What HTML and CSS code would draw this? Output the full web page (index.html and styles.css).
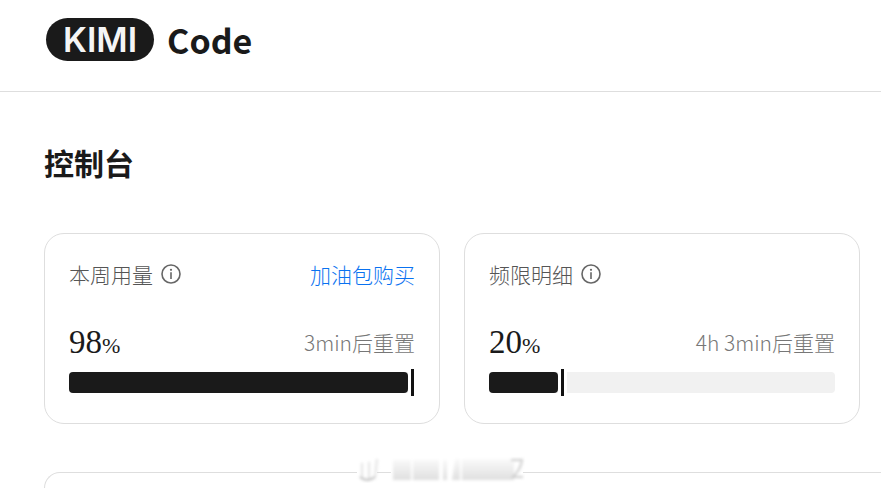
FILE: index.html
```html
<!DOCTYPE html>
<html lang="zh-CN">
<head>
<meta charset="utf-8">
<title>Kimi Code</title>
<meta name="viewport" content="width=device-width, initial-scale=1">
<link rel="stylesheet" href="styles.css">
</head>
<body>
<header class="header">
  <div class="brand"><span class="brand-pill">KIMI</span><span class="brand-name">Code</span></div>
</header>
<main class="main">
  <h1 class="title">控制台</h1>
  <div class="cards">
    <section class="card">
      <div class="row">
        <h2 class="label">本周用量
          <svg class="info" viewBox="0 0 20 20" aria-hidden="true"><circle cx="10" cy="10" r="9"/><path d="M10 8.2V15"/><circle class="dot" cx="10" cy="5.8" r="1.1"/></svg>
        </h2>
        <a class="link" href="#">加油包购买</a>
      </div>
      <div class="row stats">
        <span class="value">98<span class="unit">%</span></span>
        <span class="reset">3min后重置</span>
      </div>
      <div class="meter"><div class="fill" style="width:98%"></div></div>
    </section>
    <section class="card">
      <div class="row">
        <h2 class="label">频限明细
          <svg class="info" viewBox="0 0 20 20" aria-hidden="true"><circle cx="10" cy="10" r="9"/><path d="M10 8.2V15"/><circle class="dot" cx="10" cy="5.8" r="1.1"/></svg>
        </h2>
      </div>
      <div class="row stats">
        <span class="value">20<span class="unit">%</span></span>
        <span class="reset">4h 3min后重置</span>
      </div>
      <div class="meter"><div class="fill" style="width:20%"></div></div>
    </section>
  </div>
  <section class="panel"></section>
</main>
<svg class="smudge" viewBox="0 0 176 32" aria-hidden="true">
  <defs>
    <filter id="soft"><feGaussianBlur stdDeviation="1.5"/></filter>
    <linearGradient id="haze" x1="0" x2="0" y1="0" y2="1"><stop offset="0" stop-color="#fafafa"/><stop offset="1" stop-color="#dfdfdf"/></linearGradient>
  </defs>
  <path d="M2 18h20M36 18h132" stroke="#fff" stroke-width="4"/>
  <g filter="url(#soft)">
    <path d="M7 9v14M14 8v17M22 5l-2 19" stroke="#e2e2e2" stroke-width="2"/>
    <path d="M5 23q7 6 15 0" fill="none" stroke="#bdbdbd" stroke-width="2"/>
    <path d="M38 6h18v20H38zM58 6h26v20H58zM88 6h4v20h-4zM100 5h5v21h-8zM107 5h52v21h-52z" fill="url(#haze)"/>
    <path d="M156 6h11q-1 9-9 17h10" fill="none" stroke="#ccc" stroke-width="2"/>
  </g>
</svg>
</body>
</html>
```
FILE: styles.css
```css
*, ::before, ::after { box-sizing: border-box; }

body {
  display: flex;
  flex-direction: column;
  position: relative;
  min-height: 100vh;
  margin: 0;
  background: #fff;
  color: #1a1a1a;
  font-family: "Noto Sans CJK SC", sans-serif;
}

.header {
  padding: 18px 46px 30px;
  border-bottom: 1px solid #dedede;
}

.brand {
  display: flex;
  align-items: center;
  gap: 13px;
}

.brand-pill {
  padding: 0 17px;
  border-radius: 22px;
  background: #1a1a1a;
  color: #f5f5f5;
  font: 600 34px/43px Inter, sans-serif;
}

.brand-name {
  font: 700 34px/40px "Noto Sans CJK SC", sans-serif;
}

.main {
  display: flex;
  flex: 1;
  flex-direction: column;
  padding: 46px 21px 0 44px;
}

.title {
  margin: 0 0 47px;
  font: 700 30px/48px "Noto Sans CJK SC", sans-serif;
}

.cards {
  display: grid;
  grid-template-columns: 1fr 1fr;
  gap: 24px;
}

.card {
  padding: 24px;
  border: 1px solid #dedede;
  border-radius: 20px;
}

.row {
  display: flex;
  align-items: center;
  justify-content: space-between;
}

.label {
  display: flex;
  align-items: center;
  gap: 8px;
  margin: 0;
  color: #555;
  font-size: 21px;
  font-weight: 300;
  line-height: 32px;
}

.info {
  width: 20px;
  height: 20px;
  fill: none;
  stroke: #666;
  stroke-width: 1.6;
}

.info .dot {
  fill: #666;
  stroke: none;
}

.link {
  color: #0a72f0;
  font-size: 21px;
  font-weight: 300;
  line-height: 32px;
  text-decoration: none;
}

.stats { margin-top: 32px; }

.value {
  font: 400 33px/40px "Liberation Serif", serif;
}

.unit {
  font-size: 22px;
  line-height: 1;
}

.reset {
  color: #777;
  font-size: 21px;
  font-weight: 300;
  line-height: 40px;
}

.meter {
  height: 21px;
  margin: 10px 0 6px;
  border-radius: 4px;
  background: #f1f1f1;
}

.fill {
  position: relative;
  height: 100%;
  border-radius: 4px;
  background: #1a1a1a;
}

/* Tick that marks the current position */
.fill::after {
  content: "";
  position: absolute;
  top: -3px;
  bottom: -3px;
  left: 100%;
  width: 9px;
  border: solid #fff;
  border-width: 0 3px;
  background: #111;
}

.panel {
  flex: 1;
  margin: 48px -21px 0 0;
  border: solid #dedede;
  border-width: 1px 0 0 1px;
  border-radius: 20px 0 0 0;
}

.smudge {
  position: absolute;
  left: 355px;
  top: 454px;
  width: 176px;
  height: 32px;
}
```
